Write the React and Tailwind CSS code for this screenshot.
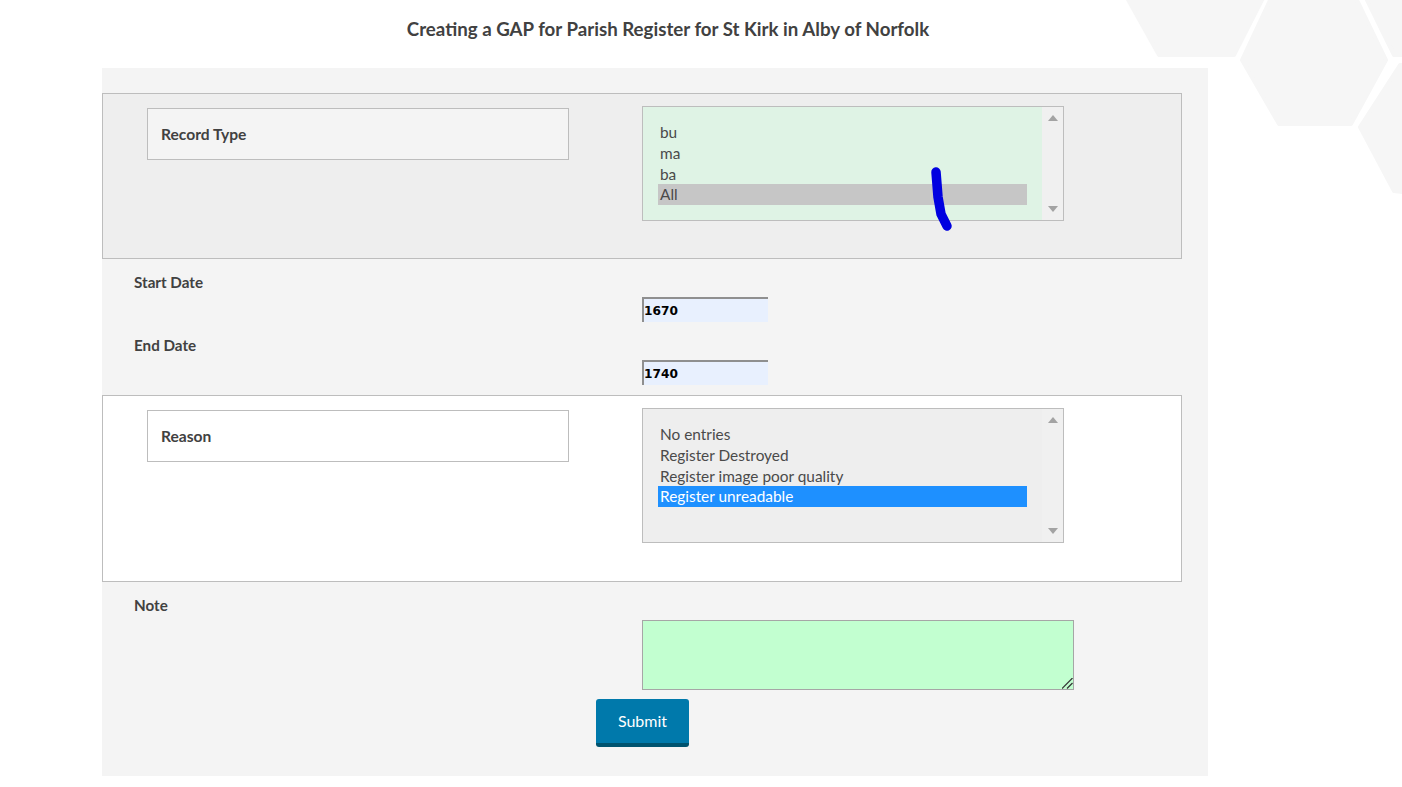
// Creating a GAP form
const font = { fontFamily: '"Lato", sans-serif' };

const ListBox = ({ items, selected, bg, selectedClass, height }) => (
    <div className={`relative flex w-[422px] border border-[#bdbdbd] ${height} ${bg}`}>
        <div className="flex-1 pt-[15.4px] pl-[15px] pr-[15px]">
            {items.map((item) => (
                <div
                    key={item}
                    className={`h-[20.67px] pl-[2px] text-[15.4px] leading-[20.67px] ${item === selected ? selectedClass : 'text-[#4a4a4a]'}`}
                >
                    {item}
                </div>
            ))}
        </div>
        <div className="flex w-[21px] flex-col items-center justify-between bg-[#f0f0f0] py-[8px]">
            <div className="h-0 w-0 border-x-[5px] border-b-[6px] border-x-transparent border-b-[#a3a3a3]"></div>
            <div className="h-0 w-0 border-x-[5px] border-t-[6px] border-x-transparent border-t-[#a3a3a3]"></div>
        </div>
    </div>
);

const Section = ({ label, bg, boxBg, children, height }) => (
    <div className={`flex w-[1080px] items-start border border-[#bdbdbd] pl-[44px] ${height} ${bg}`}>
        <div className={`mt-[14px] flex h-[52px] w-[422px] items-center border border-[#bdbdbd] pl-[13px] pt-[2px] text-[15.6px] font-bold text-[#414141] ${boxBg}`}>
            {label}
        </div>
        <div className="relative ml-[73px] mt-[12px]">{children}</div>
    </div>
);

const Row = ({ label, children }) => (
    <div className="flex items-start">
        <div className="w-[540px] pl-[32px] pt-[11px] text-[15.2px] font-bold leading-[24px] text-[#414141]">{label}</div>
        <div className="pt-[38px]">{children}</div>
    </div>
);

const YearInput = ({ value }) => (
    <input
        readOnly
        defaultValue={value}
        className="block h-[25px] w-[126px] border-l-2 border-t-2 border-[#8f8f8f] bg-[#e8f0fe] pl-0 text-[12.2px] font-bold text-black outline-none"
        style={{ fontFamily: '"DejaVu Sans", sans-serif' }}
    />
);

export default function App() {
    return (
        <div className="relative h-[787px] w-[1402px] overflow-hidden bg-white" style={font}>
            {/* background hexagons */}
            <svg
                className="absolute left-0 top-0"
                width="1402"
                height="787"
                fill="#f6f6f6"
                stroke="#f6f6f6"
                strokeWidth="4"
                strokeLinejoin="round"
            >
                <polygon points="1126,-4 1159,55 1234,55 1264,-4" />
                <polygon points="1272,-4 1355,-4 1386,60 1351,124 1279,124 1242,60" />
                <polygon points="1365,-4 1394,55 1410,55 1410,-4" />
                <polygon points="1400,65 1410,65 1410,193 1394,191 1360,127" />
            </svg>

            <div className="relative">
                <div className="flex h-[68px] w-[1336px] items-center justify-center pb-[9px] text-[18.7px] font-bold text-[#414141]">
                    Creating a GAP for Parish Register for St Kirk in Alby of Norfolk
                </div>

                <div className="ml-[102px] w-[1106px] bg-[#f4f4f4] pb-[29px] pt-[25px]">
                    <Section label="Record Type" bg="bg-[#eeeeee]" boxBg="bg-[#f4f4f4]" height="h-[166px]">
                        <ListBox
                            items={['bu', 'ma', 'ba', 'All']}
                            selected="All"
                            bg="bg-[#dff3e5]"
                            selectedClass="bg-[#c6c6c6] text-[#4a4a4a]"
                            height="h-[115px]"
                        />
                        {/* pen mark drawn over the list */}
                        <svg className="absolute left-[285px] top-[55px]" width="30" height="75" fill="none">
                            <path
                                d="M9 11 L11 36 L14 53 L20 65"
                                stroke="#0000e0"
                                strokeWidth="9.5"
                                strokeLinecap="round"
                                strokeLinejoin="round"
                            />
                        </svg>
                    </Section>

                    <Row label="Start Date"><YearInput value="1670" /></Row>
                    <Row label="End Date"><YearInput value="1740" /></Row>

                    <div className="mt-[10px]">
                        <Section label="Reason" bg="bg-white" boxBg="bg-white" height="h-[187px]">
                            <ListBox
                                items={['No entries', 'Register Destroyed', 'Register image poor quality', 'Register unreadable']}
                                selected="Register unreadable"
                                bg="bg-[#eeeeee]"
                                selectedClass="bg-[#1e90ff] text-white"
                                height="h-[135px]"
                            />
                        </Section>
                    </div>

                    <Row label="Note">
                        <div className="relative">
                            <textarea className="block h-[70px] w-[432px] resize-none border border-[#a6a6a6] bg-[#c2ffd0] outline-none"></textarea>
                            {/* resize grip */}
                            <svg className="absolute left-[420px] top-[58px]" width="11" height="11" stroke="#333333" strokeWidth="1.2">
                                <path d="M0 10.5 L10.5 0" />
                                <path d="M5 10.5 L10.5 5" />
                            </svg>
                        </div>
                    </Row>

                    <button className="ml-[494px] mt-[9px] block h-[48px] w-[93px] rounded-[3px] border-b-[4px] border-[#00536f] bg-[#0079ab] text-[16px] text-white">
                        Submit
                    </button>
                </div>
            </div>
        </div>
    );
}
